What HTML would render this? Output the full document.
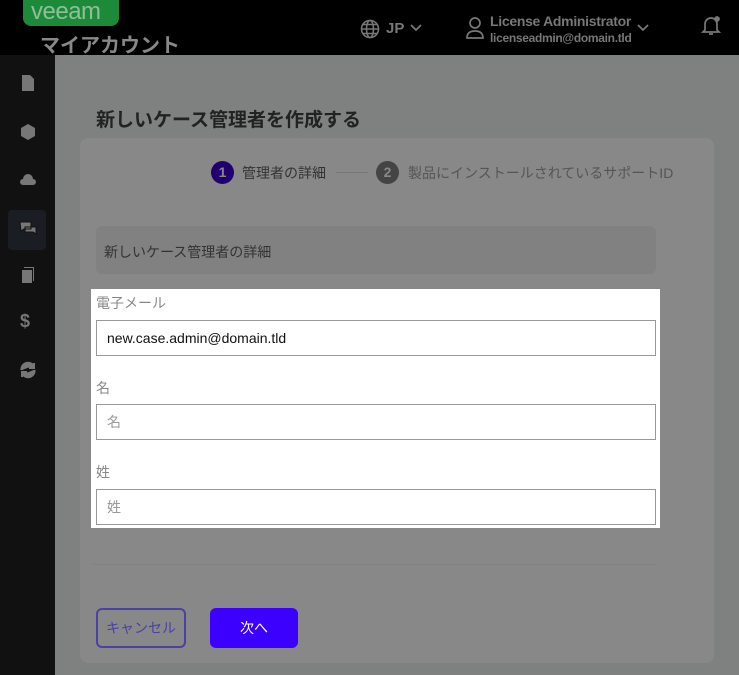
<!DOCTYPE html>
<html><head><meta charset="utf-8"><style>
*{box-sizing:border-box;margin:0;padding:0}
body{width:739px;height:675px;overflow:hidden;background:#7f8080;font-family:"Liberation Sans","Noto Sans CJK JP",sans-serif;position:relative}
.hdr{position:absolute;left:0;top:0;width:739px;height:55px;background:#000}
.side{position:absolute;left:0;top:55px;width:55px;height:620px;background:#111}
.ab{position:absolute}
.card{position:absolute;left:80px;top:138px;width:634px;height:525px;background:#888;border-radius:8px}
.lbl{position:absolute;left:96px;font-size:14px;color:#888}
.inp{position:absolute;left:96px;width:560px;height:36px;border:1px solid #999;background:#fff;font-size:14px;padding:0 10px;line-height:34px}
.ic{position:absolute;left:19px;width:18px;height:18px;fill:#777}
</style></head><body>
<div class="hdr">
 <div class="ab" style="left:23px;top:0;width:96px;height:26px;background:#1d8a3a;border-radius:0 0 8px 8px;color:#8fbf9a;font-size:24px;line-height:24px;padding-left:8px;letter-spacing:-0.5px">veeam</div>
 <div class="ab" style="left:40px;top:29px;color:#888;font-size:20px;font-weight:bold">マイアカウント</div>
 <svg class="ab" style="left:360px;top:19px" width="20" height="20" viewBox="0 0 20 20" fill="none" stroke="#777" stroke-width="1.6"><circle cx="10" cy="10" r="8.5"/><ellipse cx="10" cy="10" rx="3.5" ry="8.5"/><path d="M1.5 10h17M3 5.5h14M3 14.5h14"/></svg>
 <div class="ab" style="left:386px;top:20px;color:#777;font-size:15px;font-weight:bold">JP</div>
 <svg class="ab" style="left:409px;top:23px" width="14" height="10" viewBox="0 0 14 10" fill="none" stroke="#777" stroke-width="1.8"><path d="M2 2l5 5 5-5"/></svg>
 <svg class="ab" style="left:465px;top:16px" width="20" height="24" viewBox="0 0 20 24" fill="none" stroke="#777" stroke-width="1.7"><circle cx="10" cy="7" r="5"/><path d="M2 22c0-5 3-7 8-7s8 2 8 7z"/></svg>
 <div class="ab" style="left:490px;top:13px;color:#777;font-size:14px;font-weight:bold;letter-spacing:-0.3px">License Administrator</div>
 <div class="ab" style="left:490px;top:31px;color:#777;font-size:12px;font-weight:bold;letter-spacing:-0.3px">licenseadmin@domain.tld</div>
 <svg class="ab" style="left:636px;top:23px" width="14" height="10" viewBox="0 0 14 10" fill="none" stroke="#777" stroke-width="1.8"><path d="M2 2l5 5 5-5"/></svg>
 <svg class="ab" style="left:701px;top:15px" width="20" height="22" viewBox="0 0 20 22" fill="none" stroke="#777" stroke-width="1.7"><path d="M4 15V9a6 6 0 0 1 12 0v6l2 2H2z M8 19h4"/><circle cx="16" cy="4" r="2" fill="#777"/></svg>
</div>
<div class="side">
 <div class="ab" style="left:8px;top:155px;width:38px;height:40px;background:#1a1d24;border-radius:4px"></div>
 <svg class="ic" style="top:19px" viewBox="0 0 18 18"><path d="M3 1h8l4 4v12H3z"/></svg>
 <svg class="ic" style="top:68px" viewBox="0 0 18 18"><path d="M9 1l7 4v8l-7 4-7-4V5z"/></svg>
 <svg class="ic" style="top:116px" viewBox="0 0 18 18"><path d="M4 14a3 3 0 0 1 0-6 5 5 0 0 1 10 0 3 3 0 0 1 0 6z"/></svg>
 <svg class="ic" style="top:164px" viewBox="0 0 18 18"><path d="M1 3h11v7H5l-3 2zM6 8h11v7l-3-2H6z" stroke="#111" stroke-width="1"/></svg>
 <svg class="ic" style="top:211px" viewBox="0 0 18 18"><path d="M3 4h10v13H3zM5 1h10v14h-1V2H5z"/></svg>
 <div class="ab" style="left:20px;top:256px;color:#777;font-size:18px;font-weight:bold">$</div>
 <svg class="ic" style="top:306px" viewBox="0 0 18 18" fill="none" stroke="#777" stroke-width="3"><path d="M3 9a6 6 0 0 1 11-4M15 9a6 6 0 0 1-11 4"/><path d="M15 2v5h-5M3 16v-5h5" stroke-width="2"/></svg>
</div>
<div class="ab" style="left:96px;top:105px;font-size:19px;font-weight:bold;color:#222">新しいケース管理者を作成する</div>
<div class="card"></div>
<div class="ab" style="left:211px;top:161px;width:23px;height:23px;border-radius:50%;background:#20006e;color:#888;font-size:14px;font-weight:bold;text-align:center;line-height:23px">1</div>
<div class="ab" style="left:242px;top:163px;font-size:14px;color:#333">管理者の詳細</div>
<div class="ab" style="left:336px;top:172px;width:32px;height:1px;background:#777"></div>
<div class="ab" style="left:376px;top:161px;width:23px;height:23px;border-radius:50%;background:#444;color:#888;font-size:14px;font-weight:bold;text-align:center;line-height:23px">2</div>
<div class="ab" style="left:408px;top:163px;font-size:14px;color:#555">製品にインストールされているサポートID</div>
<div class="ab" style="left:96px;top:226px;width:560px;height:48px;background:#808180;border-radius:6px;font-size:14px;color:#333;padding:16px 0 0 8px">新しいケース管理者の詳細</div>
<div class="ab" style="left:91px;top:289px;width:569px;height:239px;background:#fff"></div>
<div class="lbl" style="top:293px">電子メール</div>
<div class="inp" style="top:320px;color:#111">new.case.admin@domain.tld</div>
<div class="lbl" style="top:378px">名</div>
<div class="inp" style="top:404px;color:#999">名</div>
<div class="lbl" style="top:462px">姓</div>
<div class="inp" style="top:489px;color:#999">姓</div>
<div class="ab" style="left:92px;top:564px;width:564px;height:1px;background:#828282"></div>
<div class="ab" style="left:96px;top:608px;width:90px;height:40px;border:2px solid #4a40a6;border-radius:6px;color:#4a40a6;font-size:14px;text-align:center;line-height:36px">キャンセル</div>
<div class="ab" style="left:210px;top:608px;width:88px;height:40px;background:#3b00ff;border-radius:6px;color:#fff;font-size:14px;text-align:center;line-height:40px">次へ</div>
</body></html>
